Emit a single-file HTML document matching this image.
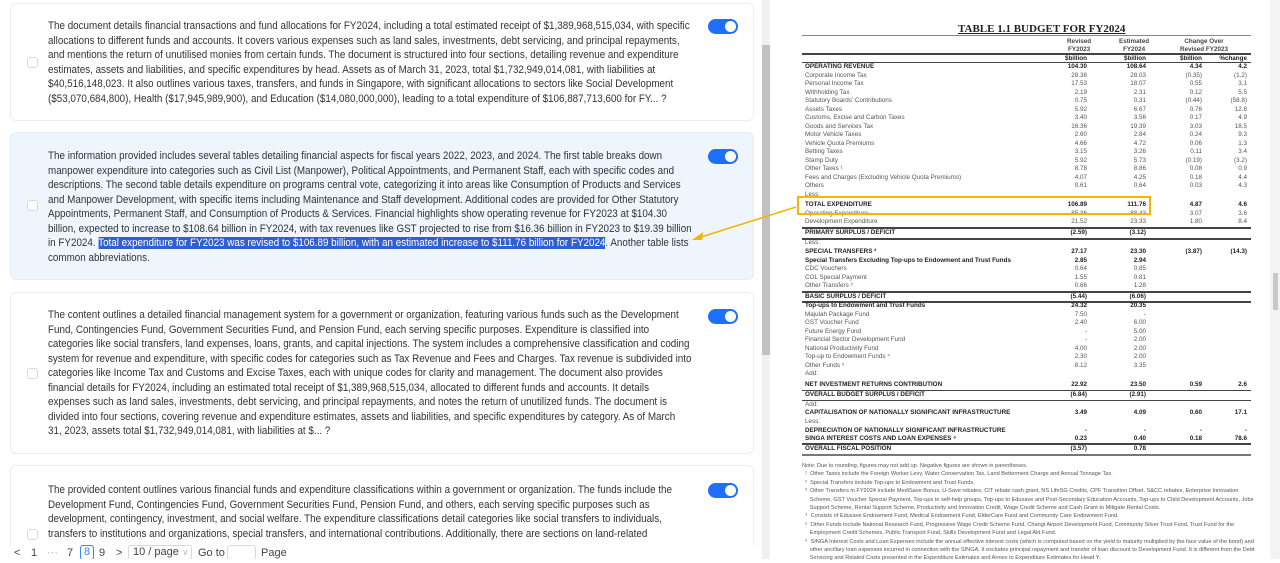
<!DOCTYPE html>
<html><head><meta charset="utf-8"><style>
*{margin:0;padding:0;box-sizing:border-box}
body{width:1280px;height:559px;overflow:hidden;background:#fff;font-family:"Liberation Sans",sans-serif;position:relative}
.left{position:absolute;left:0;top:0;width:762px;height:559px;background:#fff;overflow:hidden}
.card{position:absolute;left:10px;width:744px;border:1px solid #eceef2;border-radius:6px;background:#fff;overflow:hidden}
.card.sel{background:#eef5fd;border-color:#e3edf9}
.txt{position:absolute;left:37px;font-size:11.1px;line-height:14.5px;color:#333;white-space:nowrap;transform:scaleX(0.887);transform-origin:0 0}
.tog{position:absolute;left:697px;width:30px;height:15px;border-radius:8px;background:#1f6fff}
.tog:after{content:"";position:absolute;right:2px;top:2px;width:11px;height:11px;border-radius:50%;background:#fff}
.cb{position:absolute;left:16px;width:11px;height:11px;border:1px solid #d6d9de;border-radius:3px;background:#fff}
.hl{background:#2f5fd0;color:#fff}
.sb{position:absolute;left:762px;top:0;width:8px;height:559px;background:#f1f1f1}
.sb i{position:absolute;left:0;top:45px;width:8px;height:310px;background:#c1c1c1}
.pg{position:absolute;top:545px;left:0;height:14px;font-size:11px;color:#444;width:760px;background:#fff}
.pg span{position:absolute;top:2px;white-space:nowrap}
.t{position:absolute;font-family:"Liberation Sans",sans-serif;font-size:6.3px;color:#444;white-space:nowrap}
.r{position:absolute;left:802px;width:449px;height:9px;font-size:6.3px;line-height:8px;color:#555;white-space:nowrap}
.r .l{position:absolute;left:3px}
.r .a{position:absolute;right:164px}.r .b{position:absolute;right:105px}.r .c{position:absolute;right:49px}.r .d{position:absolute;right:4px}
.r.k{font-weight:bold;color:#222}
.hr{position:absolute;left:802px;width:449px;background:#444}
.n{position:absolute;left:802px;font-size:5.6px;color:#555;white-space:nowrap;line-height:8.4px}
</style></head><body>
<div class="left">
 <div class="card" style="top:3px;height:118px">
  <div class="txt" style="top:15px">The document details financial transactions and fund allocations for FY2024, including a total estimated receipt of $1,389,968,515,034, with specific<br>allocations to different funds and accounts. It covers various expenses such as land sales, investments, debt servicing, and principal repayments,<br>and mentions the return of unutilised monies from certain funds. The document is structured into four sections, detailing revenue and expenditure<br>estimates, assets and liabilities, and specific expenditures by head. Assets as of March 31, 2023, total $1,732,949,014,081, with liabilities at<br>$40,516,148,023. It also outlines various taxes, transfers, and funds in Singapore, with significant allocations to sectors like Social Development<br>($53,070,684,800), Health ($17,945,989,900), and Education ($14,080,000,000), leading to a total expenditure of $106,887,713,600 for FY... ?</div>
  <div class="tog" style="top:15px"></div><div class="cb" style="top:53px"></div>
 </div>
 <div class="card sel" style="top:132px;height:148px">
  <div class="txt" style="top:16px">The information provided includes several tables detailing financial aspects for fiscal years 2022, 2023, and 2024. The first table breaks down<br>manpower expenditure into categories such as Civil List (Manpower), Political Appointments, and Permanent Staff, each with specific codes and<br>descriptions. The second table details expenditure on programs central vote, categorizing it into areas like Consumption of Products and Services<br>and Manpower Development, with specific items including Maintenance and Staff development. Additional codes are provided for Other Statutory<br>Appointments, Permanent Staff, and Consumption of Products &amp; Services. Financial highlights show operating revenue for FY2023 at $104.30<br>billion, expected to increase to $108.64 billion in FY2024, with tax revenues like GST projected to rise from $16.36 billion in FY2023 to $19.39 billion<br>in FY2024. <span class="hl">Total expenditure for FY2023 was revised to $106.89 billion, with an estimated increase to $111.76 billion for FY2024</span>. Another table lists<br>common abbreviations.</div>
  <div class="tog" style="top:16px"></div><div class="cb" style="top:67px"></div>
 </div>
 <div class="card" style="top:292px;height:162px">
  <div class="txt" style="top:15px">The content outlines a detailed financial management system for a government or organization, featuring various funds such as the Development<br>Fund, Contingencies Fund, Government Securities Fund, and Pension Fund, each serving specific purposes. Expenditure is classified into<br>categories like social transfers, land expenses, loans, grants, and capital injections. The system includes a comprehensive classification and coding<br>system for revenue and expenditure, with specific codes for categories such as Tax Revenue and Fees and Charges. Tax revenue is subdivided into<br>categories like Income Tax and Customs and Excise Taxes, each with unique codes for clarity and management. The document also provides<br>financial details for FY2024, including an estimated total receipt of $1,389,968,515,034, allocated to different funds and accounts. It details<br>expenses such as land sales, investments, debt servicing, and principal repayments, and notes the return of unutilized funds. The document is<br>divided into four sections, covering revenue and expenditure estimates, assets and liabilities, and specific expenditures by category. As of March<br>31, 2023, assets total $1,732,949,014,081, with liabilities at $... ?</div>
  <div class="tog" style="top:16px"></div><div class="cb" style="top:75px"></div>
 </div>
 <div class="card" style="top:465px;height:120px">
  <div class="txt" style="top:17px">The provided content outlines various financial funds and expenditure classifications within a government or organization. The funds include the<br>Development Fund, Contingencies Fund, Government Securities Fund, Pension Fund, and others, each serving specific purposes such as<br>development, contingency, investment, and social welfare. The expenditure classifications detail categories like social transfers to individuals,<br>transfers to institutions and organizations, special transfers, and international contributions. Additionally, there are sections on land-related</div>
  <div class="tog" style="top:17px"></div><div class="cb" style="top:63px"></div>
 </div>
 <div class="pg">
  <span style="left:14px">&lt;</span><span style="left:31px">1</span><span style="left:47px;color:#aaa">···</span><span style="left:67px">7</span>
  <span style="left:80px;top:0;width:14px;height:15px;border:1px solid #3b82f6;border-radius:3px;color:#3b82f6;text-align:center;line-height:13px">8</span>
  <span style="left:99px">9</span><span style="left:116px">&gt;</span>
  <span style="left:128px;top:0;width:64px;height:15px;border:1px solid #d9d9d9;border-radius:3px;padding-left:4px;line-height:13px">10 / page <span style="position:static;color:#bbb;font-size:9px">∨</span></span>
  <span style="left:198px">Go to</span>
  <span style="left:227px;top:0;width:29px;height:15px;border:1px solid #d9d9d9;border-radius:3px"></span>
  <span style="left:261px">Page</span>
 </div>
</div>
<div class="sb"><i></i></div>
<div style="position:absolute;left:1270px;top:0;width:10px;height:559px;background:#f3f3f3"><i style="position:absolute;left:3px;top:273px;width:5px;height:37px;background:#c8c8c8"></i></div>

<div class="t" style="left:958px;top:23px;font-family:'Liberation Serif',serif;font-weight:bold;font-size:11px;text-decoration:underline;color:#222">TABLE 1.1 BUDGET FOR FY2024</div>
<div class="hr" style="top:35px;height:1px;background:#888"></div>
<div class="t" style="left:1067px;top:38px;font-weight:bold;text-align:center;line-height:8px">Revised<br>FY2023</div>
<div class="t" style="left:1119px;top:38px;font-weight:bold;text-align:center;line-height:8px">Estimated<br>FY2024</div>
<div class="t" style="left:1180px;top:38px;font-weight:bold;text-align:center;line-height:8px">Change Over<br>Revised FY2023</div>
<div class="hr" style="top:53px;height:2px"></div>
<div class="r k" style="top:55px"><span class="a">$billion</span><span class="b">$billion</span><span class="c">$billion</span><span class="d">%change</span></div>
<div class="hr" style="top:62px;height:1px"></div>
<div class="r k" style="top:63px"><span class="l">OPERATING REVENUE</span><span class="a">104.30</span><span class="b">108.64</span><span class="c">4.34</span><span class="d">4.2</span></div>
<div class="r" style="top:71.5px"><span class="l">Corporate Income Tax</span><span class="a">28.38</span><span class="b">28.03</span><span class="c">(0.35)</span><span class="d">(1.2)</span></div>
<div class="r" style="top:80px"><span class="l">Personal Income Tax</span><span class="a">17.53</span><span class="b">18.07</span><span class="c">0.55</span><span class="d">3.1</span></div>
<div class="r" style="top:88.5px"><span class="l">Withholding Tax</span><span class="a">2.19</span><span class="b">2.31</span><span class="c">0.12</span><span class="d">5.5</span></div>
<div class="r" style="top:97px"><span class="l">Statutory Boards' Contributions</span><span class="a">0.75</span><span class="b">0.31</span><span class="c">(0.44)</span><span class="d">(58.8)</span></div>
<div class="r" style="top:105.5px"><span class="l">Assets Taxes</span><span class="a">5.92</span><span class="b">6.67</span><span class="c">0.76</span><span class="d">12.8</span></div>
<div class="r" style="top:114px"><span class="l">Customs, Excise and Carbon Taxes</span><span class="a">3.40</span><span class="b">3.56</span><span class="c">0.17</span><span class="d">4.9</span></div>
<div class="r" style="top:122.5px"><span class="l">Goods and Services Tax</span><span class="a">16.36</span><span class="b">19.39</span><span class="c">3.03</span><span class="d">18.5</span></div>
<div class="r" style="top:131px"><span class="l">Motor Vehicle Taxes</span><span class="a">2.60</span><span class="b">2.84</span><span class="c">0.24</span><span class="d">9.3</span></div>
<div class="r" style="top:139.5px"><span class="l">Vehicle Quota Premiums</span><span class="a">4.66</span><span class="b">4.72</span><span class="c">0.06</span><span class="d">1.3</span></div>
<div class="r" style="top:148px"><span class="l">Betting Taxes</span><span class="a">3.15</span><span class="b">3.26</span><span class="c">0.11</span><span class="d">3.4</span></div>
<div class="r" style="top:156.5px"><span class="l">Stamp Duty</span><span class="a">5.92</span><span class="b">5.73</span><span class="c">(0.19)</span><span class="d">(3.2)</span></div>
<div class="r" style="top:165px"><span class="l">Other Taxes ¹</span><span class="a">8.78</span><span class="b">8.86</span><span class="c">0.08</span><span class="d">0.9</span></div>
<div class="r" style="top:173.5px"><span class="l">Fees and Charges (Excluding Vehicle Quota Premiums)</span><span class="a">4.07</span><span class="b">4.25</span><span class="c">0.18</span><span class="d">4.4</span></div>
<div class="r" style="top:182px"><span class="l">Others</span><span class="a">0.61</span><span class="b">0.64</span><span class="c">0.03</span><span class="d">4.3</span></div>
<div class="r" style="top:190.5px"><span class="l">Less:</span></div>
<div class="r k" style="top:201px"><span class="l">TOTAL EXPENDITURE</span><span class="a">106.89</span><span class="b">111.76</span><span class="c">4.87</span><span class="d">4.6</span></div>
<div class="r" style="top:209.5px"><span class="l">Operating Expenditure</span><span class="a">85.36</span><span class="b">88.43</span><span class="c">3.07</span><span class="d">3.6</span></div>
<div class="r" style="top:218px"><span class="l">Development Expenditure</span><span class="a">21.52</span><span class="b">23.33</span><span class="c">1.80</span><span class="d">8.4</span></div>
<div class="hr" style="top:227px;height:1.5px"></div>
<div class="r k" style="top:229px"><span class="l">PRIMARY SURPLUS / DEFICIT</span><span class="a">(2.59)</span><span class="b">(3.12)</span></div>
<div class="hr" style="top:238px;height:1.5px"></div>
<div class="r" style="top:239px"><span class="l">Less:</span></div>
<div class="r k" style="top:248px"><span class="l">SPECIAL TRANSFERS ²</span><span class="a">27.17</span><span class="b">23.30</span><span class="c">(3.87)</span><span class="d">(14.3)</span></div>
<div class="r k" style="top:256.5px"><span class="l">Special Transfers Excluding Top-ups to Endowment and Trust Funds</span><span class="a">2.85</span><span class="b">2.94</span></div>
<div class="r" style="top:265px"><span class="l">CDC Vouchers</span><span class="a">0.64</span><span class="b">0.85</span></div>
<div class="r" style="top:273.5px"><span class="l">COL Special Payment</span><span class="a">1.55</span><span class="b">0.81</span></div>
<div class="r" style="top:282px"><span class="l">Other Transfers ³</span><span class="a">0.66</span><span class="b">1.28</span></div>
<div class="hr" style="top:291px;height:1.5px"></div>
<div class="r k" style="top:292.5px"><span class="l">BASIC SURPLUS / DEFICIT</span><span class="a">(5.44)</span><span class="b">(6.06)</span></div>
<div class="hr" style="top:301px;height:1.5px"></div>
<div class="r k" style="top:302px"><span class="l">Top-ups to Endowment and Trust Funds</span><span class="a">24.32</span><span class="b">20.35</span></div>
<div class="r" style="top:310.5px"><span class="l">Majulah Package Fund</span><span class="a">7.50</span><span class="b">-</span></div>
<div class="r" style="top:319px"><span class="l">GST Voucher Fund</span><span class="a">2.40</span><span class="b">6.00</span></div>
<div class="r" style="top:327.5px"><span class="l">Future Energy Fund</span><span class="a">-</span><span class="b">5.00</span></div>
<div class="r" style="top:336px"><span class="l">Financial Sector Development Fund</span><span class="a">-</span><span class="b">2.00</span></div>
<div class="r" style="top:344.5px"><span class="l">National Productivity Fund</span><span class="a">4.00</span><span class="b">2.00</span></div>
<div class="r" style="top:353px"><span class="l">Top-up to Endowment Funds ⁴</span><span class="a">2.30</span><span class="b">2.00</span></div>
<div class="r" style="top:361.5px"><span class="l">Other Funds ⁵</span><span class="a">8.12</span><span class="b">3.35</span></div>
<div class="r" style="top:370px"><span class="l">Add:</span></div>
<div class="r k" style="top:381px"><span class="l">NET INVESTMENT RETURNS CONTRIBUTION</span><span class="a">22.92</span><span class="b">23.50</span><span class="c">0.59</span><span class="d">2.6</span></div>
<div class="hr" style="top:389.5px;height:1.5px"></div>
<div class="r k" style="top:391px"><span class="l">OVERALL BUDGET SURPLUS / DEFICIT</span><span class="a">(6.84)</span><span class="b">(2.91)</span></div>
<div class="hr" style="top:399.5px;height:1.5px"></div>
<div class="r" style="top:400.5px"><span class="l">Add:</span></div>
<div class="r k" style="top:409px"><span class="l">CAPITALISATION OF NATIONALLY SIGNIFICANT INFRASTRUCTURE</span><span class="a">3.49</span><span class="b">4.09</span><span class="c">0.60</span><span class="d">17.1</span></div>
<div class="r" style="top:418px"><span class="l">Less:</span></div>
<div class="r k" style="top:426.5px"><span class="l">DEPRECIATION OF NATIONALLY SIGNIFICANT INFRASTRUCTURE</span><span class="a">-</span><span class="b">-</span><span class="c">-</span><span class="d">-</span></div>
<div class="r k" style="top:435px"><span class="l">SINGA INTEREST COSTS AND LOAN EXPENSES ⁶</span><span class="a">0.23</span><span class="b">0.40</span><span class="c">0.18</span><span class="d">78.6</span></div>
<div class="hr" style="top:443px;height:2px"></div>
<div class="r k" style="top:445px"><span class="l">OVERALL FISCAL POSITION</span><span class="a">(3.57)</span><span class="b">0.78</span></div>
<div class="hr" style="top:454px;height:2px;background:#777"></div>
<div class="n" style="top:462px">Note: Due to rounding, figures may not add up. Negative figures are shown in parentheses.<br>
&nbsp;&nbsp;¹ &nbsp;Other Taxes include the Foreign Worker Levy, Water Conservation Tax, Land Betterment Charge and Annual Tonnage Tax.<br>
&nbsp;&nbsp;² &nbsp;Special Transfers include Top-ups to Endowment and Trust Funds.<br>
&nbsp;&nbsp;³ &nbsp;Other Transfers in FY2024 include MediSave Bonus, U-Save rebates, CIT rebate cash grant, NS LifeSG Credits, CPF Transition Offset, S&amp;CC rebates, Enterprise Innovation<br>
&nbsp;&nbsp;&nbsp;&nbsp;&nbsp;Scheme, GST Voucher Special Payment, Top-ups to self-help groups, Top-ups to Edusave and Post-Secondary Education Accounts, Top-ups to Child Development Accounts, Jobs<br>
&nbsp;&nbsp;&nbsp;&nbsp;&nbsp;Support Scheme, Rental Support Scheme, Productivity and Innovation Credit, Wage Credit Scheme and Cash Grant to Mitigate Rental Costs.<br>
&nbsp;&nbsp;⁴ &nbsp;Consists of Edusave Endowment Fund, Medical Endowment Fund, ElderCare Fund and Community Care Endowment Fund.<br>
&nbsp;&nbsp;⁵ &nbsp;Other Funds include National Research Fund, Progressive Wage Credit Scheme Fund, Changi Airport Development Fund, Community Silver Trust Fund, Trust Fund for the<br>
&nbsp;&nbsp;&nbsp;&nbsp;&nbsp;Employment Credit Schemes, Public Transport Fund, Skills Development Fund and Legal Aid Fund.<br>
&nbsp;&nbsp;⁶ &nbsp;SINGA Interest Costs and Loan Expenses include the annual effective interest costs (which is computed based on the yield to maturity multiplied by the face value of the bond) and<br>
&nbsp;&nbsp;&nbsp;&nbsp;&nbsp;other ancillary loan expenses incurred in connection with the SINGA. It excludes principal repayment and transfer of loan discount to Development Fund. It is different from the Debt<br>
&nbsp;&nbsp;&nbsp;&nbsp;&nbsp;Servicing and Related Costs presented in the Expenditure Estimates and Annex to Expenditure Estimates for Head Y.</div>

<div style="position:absolute;left:797px;top:196px;width:354px;height:19px;border:2px solid #f7b500"></div>
<svg style="position:absolute;left:0;top:0" width="1280" height="559"><line x1="796" y1="207" x2="698" y2="238" stroke="#f5b400" stroke-width="1.5"/><path d="M692 240 L703 232 L702 240 Z" fill="#f5b400"/></svg>
</body></html>
